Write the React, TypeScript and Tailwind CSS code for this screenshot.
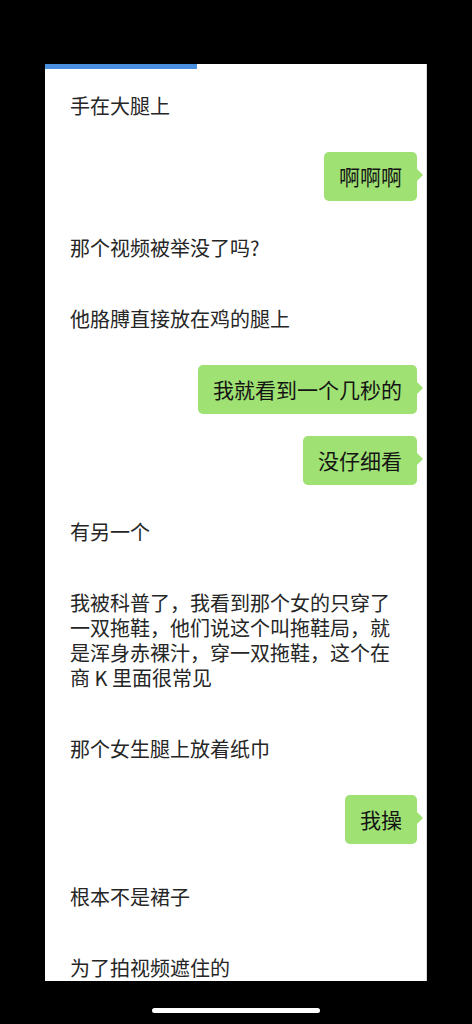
type Msg = { side: 'left' | 'right'; text: string; extra?: boolean }

const messages: Msg[] = [
  { side: 'left', text: '手在大腿上' },
  { side: 'right', text: '啊啊啊' },
  { side: 'left', text: '那个视频被举没了吗?' },
  { side: 'left', text: '他胳膊直接放在鸡的腿上' },
  { side: 'right', text: '我就看到一个几秒的' },
  { side: 'right', text: '没仔细看' },
  { side: 'left', text: '有另一个' },
  {
    side: 'left',
    text: '我被科普了，我看到那个女的只穿了一双拖鞋，他们说这个叫拖鞋局，就是浑身赤裸汁，穿一双拖鞋，这个在商 K 里面很常见',
  },
  { side: 'left', text: '那个女生腿上放着纸巾' },
  { side: 'right', text: '我操' },
  { side: 'left', text: '根本不是裙子', extra: true },
  { side: 'left', text: '为了拍视频遮住的' },
]

function Bubble({ msg }: { msg: Msg }) {
  if (msg.side === 'right') {
    return (
      <div className="flex justify-end pr-[9px]">
        <div className="relative max-w-[330px] rounded-[5px] bg-[#9fe173] px-[15px] py-[12px] text-[21px] leading-[25px] text-[#141414]">
          {msg.text}
          <span className="absolute right-[-6px] top-[17px] h-0 w-0 border-y-[6px] border-l-[6px] border-y-transparent border-l-[#9fe173]" />
        </div>
      </div>
    )
  }
  return (
    <div className={`flex justify-start pl-[10px] ${msg.extra ? 'mt-[6px]' : ''}`}>
      <div className="max-w-[360px] rounded-[5px] bg-white px-[15px] py-[12px] text-[20px] leading-[25px] text-[#262626]">
        {msg.text}
      </div>
    </div>
  )
}

export default function App() {
  return (
    <div
      className="h-[1024px] w-[472px] overflow-hidden bg-black"
      style={{ fontFamily: '"Noto Sans CJK SC", "Noto Sans", sans-serif' }}
    >
      <div className="ml-[45px] mt-[64px] h-[917px] w-[382px] overflow-hidden border-r border-[#d8d8d8] bg-white">
        <div className="h-[5px] w-[152px] bg-[#4a8fe0]" />
        <div className="flex flex-col gap-[22px] pt-[12px]">
          {messages.map((m, i) => (
            <Bubble key={i} msg={m} />
          ))}
        </div>
      </div>
      <div className="ml-[152px] mt-[27px] h-[5px] w-[168px] rounded-full bg-white" />
    </div>
  )
}
